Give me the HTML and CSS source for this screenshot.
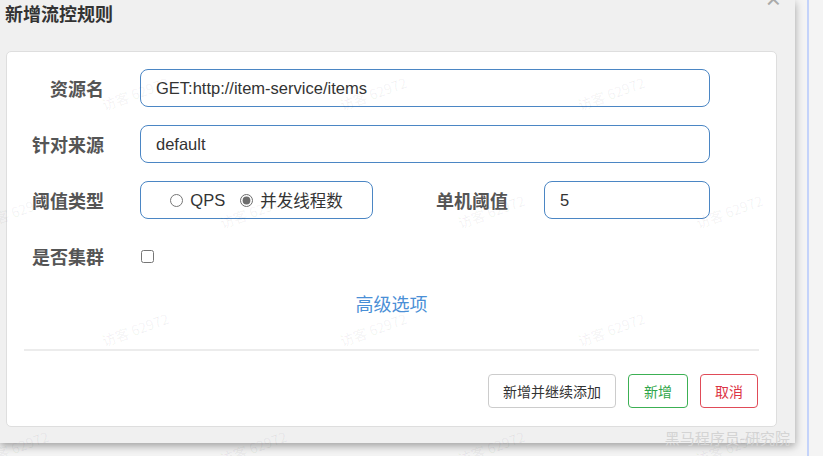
FILE: index.html
```html
<!doctype html>
<html lang="zh">
	<head>
		<meta charset="utf-8">
		<title>新增流控规则</title>
		<link rel="stylesheet" href="styles.css">
	</head>
	<body>
		<div class="modal">
			<span class="modal-close">×</span>
			<h4 class="modal-title">新增流控规则</h4>

			<div class="card">
				<div class="form-row">
					<label class="form-label">资源名</label>
					<input class="form-input wide" type="text" value="GET:http://item-service/items" />
				</div>
				<div class="form-row">
					<label class="form-label">针对来源</label>
					<input class="form-input wide" type="text" value="default" />
				</div>
				<div class="form-row">
					<label class="form-label">阈值类型</label>
					<div class="radio-box">
						<label class="radio"><input type="radio" name="grade" />QPS</label>
						<label class="radio"><input type="radio" name="grade" checked />并发线程数</label>
					</div>
					<label class="form-label label-count">单机阈值</label>
					<input class="form-input narrow" type="text" value="5" />
				</div>
				<div class="form-row">
					<label class="form-label">是否集群</label>
					<input class="cluster-check" type="checkbox" />
				</div>

				<div class="advanced"><a>高级选项</a></div>

				<div class="divider"></div>

				<div class="actions">
					<button class="btn btn-default">新增并继续添加</button>
					<button class="btn btn-success">新增</button>
					<button class="btn btn-danger">取消</button>
				</div>
			</div>

			<span class="brand-mark">黑马程序员-研究院</span>
		</div>
		<div class="page-edge"></div>

		<div class="watermarks">
			<div class="wm-row row-a"><span>访客 62972</span><span>访客 62972</span><span>访客 62972</span></div>
			<div class="wm-row row-b"><span>访客 62972</span><span>访客 62972</span><span>访客 62972</span><span>访客 62972</span></div>
			<div class="wm-row row-a"><span>访客 62972</span><span>访客 62972</span><span>访客 62972</span></div>
			<div class="wm-row row-b"><span>访客 62972</span><span>访客 62972</span><span>访客 62972</span><span>访客 62972</span></div>
		</div>
	</body>
</html>
```

FILE: styles.css
```css
html {
	font-family: "Liberation Sans", "Noto Sans CJK SC", sans-serif;
}

body {
	margin: 0;
	height: 456px;
	overflow: hidden;
	display: flex;
	background: #f4f4f4;
	position: relative;
}

.modal {
	position: relative;
	width: 795px;
	height: 443px;
	flex-shrink: 0;
	background: #f0f0f0;
	box-shadow: 0 3px 8px rgba(0, 0, 0, 0.35);
}

.modal-title {
	margin: 0;
	padding: 3px 0 0 5px;
	height: 20px;
	line-height: 20px;
	font-family: "Noto Sans CJK SC", sans-serif;
	font-size: 18px;
	font-weight: bold;
	color: #333;
}

.modal-close {
	position: absolute;
	top: -14px;
	right: 14px;
	font-size: 26px;
	line-height: 26px;
	color: #aaa;
}

.card {
	box-sizing: border-box;
	margin: 28px 0 0 6px;
	width: 771px;
	height: 376px;
	padding-top: 17px;
	background: #fff;
	border: 1px solid #dedede;
	border-radius: 5px;
}

.form-row {
	display: flex;
	align-items: center;
	height: 38px;
	margin-bottom: 18px;
}

.form-label {
	width: 97px;
	text-align: right;
	font-family: "Noto Sans CJK SC", sans-serif;
	font-size: 18px;
	font-weight: bold;
	color: #555;
}

.label-count {
	width: 135px;
}

.form-input {
	box-sizing: border-box;
	margin-left: 36px;
	height: 38px;
	padding: 0 15px;
	border: 1px solid #4b86c4;
	border-radius: 8px;
	font-family: "Liberation Sans", sans-serif;
	font-size: 16.5px;
	color: #333;
	outline: none;
}

.form-input.wide {
	width: 570px;
}

.form-input.narrow {
	width: 166px;
}

.radio-box {
	box-sizing: border-box;
	margin-left: 36px;
	width: 233px;
	height: 38px;
	display: flex;
	align-items: center;
	justify-content: center;
	gap: 15px;
	border: 1px solid #4b86c4;
	border-radius: 8px;
	font-size: 16.5px;
	color: #333;
}

.radio {
	display: flex;
	align-items: center;
	gap: 7px;
	font-family: "Liberation Sans", "Noto Sans CJK SC", sans-serif;
}

.radio input {
	margin: 0;
	width: 13px;
	height: 13px;
	accent-color: #6d6d6d;
}

.cluster-check {
	margin: 0 0 0 37px;
	width: 13px;
	height: 13px;
}

.advanced {
	margin-top: -3px;
	text-align: center;
	line-height: 26px;
	font-family: "Noto Sans CJK SC", sans-serif;
	font-size: 18px;
}

.advanced a {
	color: #4a8fd6;
	cursor: pointer;
}

.divider {
	margin: 33px 17px 0;
	height: 2px;
	background: #ececec;
}

.actions {
	display: flex;
	justify-content: flex-end;
	gap: 12px;
	margin-top: 23px;
	padding-right: 18px;
}

.btn {
	height: 34px;
	padding: 0 14px;
	background: #fff;
	border: 1px solid #ccc;
	border-radius: 4px;
	font-family: "Noto Sans CJK SC", sans-serif;
	font-size: 14px;
	color: #333;
	cursor: pointer;
}

.btn-success {
	padding: 0 15px;
	border-color: #3cb054;
	color: #2fa64a;
}

.btn-danger {
	border-color: #e04b58;
	color: #dc3545;
}

.brand-mark {
	position: absolute;
	top: 427px;
	right: 5px;
	font-family: "Noto Sans CJK SC", serif;
	font-size: 15px;
	color: #d4d4d4;
}

.page-edge {
	margin-left: 12px;
	border-left: 2px solid #c4d3fa;
	flex: 1;
}

.watermarks {
	position: absolute;
	inset: 0;
	padding-top: 83px;
	display: flex;
	flex-direction: column;
	gap: 98px;
	pointer-events: none;
}

.wm-row {
	display: flex;
	gap: 166px;
	height: 20px;
	white-space: nowrap;
}

.wm-row.row-a {
	padding-left: 100px;
}

.wm-row.row-b {
	padding-left: 0;
	margin-left: -20px;
}

.wm-row span {
	display: inline-block;
	width: 72px;
	font-family: "Noto Sans CJK SC", sans-serif;
	font-size: 14px;
	color: rgba(0, 0, 0, 0.06);
	transform: rotate(-20deg);
}
```
